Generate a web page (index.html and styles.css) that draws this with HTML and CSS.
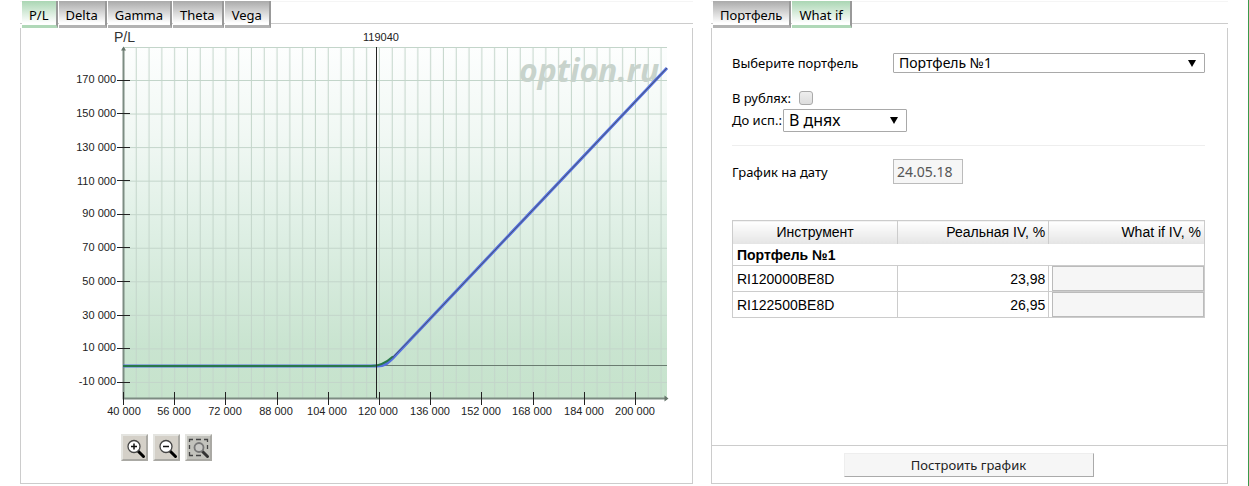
FILE: index.html
```
<!DOCTYPE html>
<html lang="ru">
  <head>
    <meta charset="utf-8">
    <title>option.ru</title>
    <link rel="stylesheet" href="styles.css">
  </head>
  <body>
    <main class="page">
      <section class="box">
        <nav class="tabs">
          <a class="tab tab_active" href="#pl">P/L</a>
          <a class="tab" href="#delta">Delta</a>
          <a class="tab" href="#gamma">Gamma</a>
          <a class="tab" href="#theta">Theta</a>
          <a class="tab" href="#vega">Vega</a>
        </nav>
        <div class="panel">
          <svg class="chart" viewBox="0 0 671 400">
            <defs>
              <linearGradient id="fill" x1="0" y1="0" x2="0" y2="1">
                <stop offset="0" stop-color="#fdfefe" />
                <stop offset="0.25" stop-color="#f1f8f4" />
                <stop offset="0.5" stop-color="#e0f0e6" />
                <stop offset="0.85" stop-color="#c9e4d0" />
                <stop offset="1" stop-color="#c6e3cc" />
              </linearGradient>
              <pattern id="columns" x="103" y="0" width="12.8" height="400" patternUnits="userSpaceOnUse">
                <path class="grid-line" d="M12.2 0V400" />
              </pattern>
              <pattern id="rows" x="0" y="52" width="671" height="33.55" patternUnits="userSpaceOnUse">
                <path class="grid-line" d="M0 .5H671" />
              </pattern>
            </defs>

            <rect x="102" y="19" width="544" height="351" fill="url(#fill)" />
            <rect x="102" y="19" width="544" height="351" fill="url(#columns)" />
            <rect x="102" y="19" width="544" height="351" fill="url(#rows)" />
            <path class="grid-line" d="M102 19.5H646" />
            <text class="watermark" x="498" y="54">option.ru</text>

            <!-- axes -->
            <path class="axis" d="M102.5 20V370.5H646" />
            <path class="arrow" d="M100 22.500l2.500-4 2.500 4zM643.500 367.500l4 3-4 3z" />
            <path class="zero" d="M102 337.500H646" />
            <path class="tick" d="M96 52.500h13M96 85.500h13M96 119.500h13M96 152.500h13M96 186.500h13M96 219.500h13M96 253.500h13M96 287.500h13M96 320.500h13M96 354.500h13" />
            <path class="tick" d="M102.500 364v13M153.500 364v13M204.500 364v13M256.500 364v13M307.500 364v13M358.500 364v13M409.500 364v13M460.500 364v13M512.500 364v13M563.500 364v13M614.500 364v13" />

            <path class="curve curve_blue" d="M102 338H356C364 338 367 335 372 330L398 302.500L646 40" />
            <path class="curve curve_green" d="M102 338H350C360 338 366 334 372 328.500" />
            <path class="curve curve_dark" d="M371 330L398 302.500L646 40" />
            <path class="tick" d="M355.500 19V370" />

            <text class="axis-name" x="93" y="14">P/L</text>
            <text class="label label_x" x="360" y="13">119040</text>

            <g class="label label_y">
              <text x="95" y="55">170 000</text>
              <text x="95" y="89">150 000</text>
              <text x="95" y="123">130 000</text>
              <text x="95" y="157">110 000</text>
              <text x="95" y="189">90 000</text>
              <text x="95" y="223">70 000</text>
              <text x="95" y="257">50 000</text>
              <text x="95" y="291">30 000</text>
              <text x="95" y="323">10 000</text>
              <text x="95" y="357">-10 000</text>
            </g>
            <g class="label label_x">
              <text x="103" y="387">40 000</text>
              <text x="153" y="387">56 000</text>
              <text x="204" y="387">72 000</text>
              <text x="255" y="387">88 000</text>
              <text x="306" y="387">104 000</text>
              <text x="357" y="387">120 000</text>
              <text x="409" y="387">136 000</text>
              <text x="460" y="387">152 000</text>
              <text x="511" y="387">168 000</text>
              <text x="563" y="387">184 000</text>
              <text x="614" y="387">200 000</text>
            </g>
          </svg>

          <div class="zoom">
            <button class="zoom-button" type="button" aria-label="Увеличить">
              <svg width="23" height="23" viewBox="0 0 23 23">
                <path d="M14.500 14.500l6 6" stroke="#000" stroke-width="3" stroke-linecap="round" />
                <circle cx="11" cy="10.500" r="6" fill="#fff" stroke="#444" stroke-width="1.300" />
                <path d="M8 10.500h6M11 7.500v6" stroke="#111" stroke-width="1.500" />
              </svg>
            </button>
            <button class="zoom-button" type="button" aria-label="Уменьшить">
              <svg width="23" height="23" viewBox="0 0 23 23">
                <path d="M14.500 14.500l6 6" stroke="#000" stroke-width="3" stroke-linecap="round" />
                <circle cx="11" cy="10.500" r="6" fill="#fff" stroke="#444" stroke-width="1.300" />
                <path d="M8 10.500h6" stroke="#111" stroke-width="1.500" />
              </svg>
            </button>
            <button class="zoom-button zoom-button_area" type="button" aria-label="Выделить область">
              <svg width="23" height="23" viewBox="0 0 23 23">
                <path d="M2.500 6V3.500H6M9 3.500h5M17 3.500h3.500V6M20.500 9v4M2.500 9v4M2.500 16v3.500H6M9 19.500h5" fill="none" stroke="#444" stroke-width="1.300" />
                <path d="M15.500 15.500l5 5" stroke="#333" stroke-width="3" stroke-linecap="round" />
                <circle cx="12" cy="11.500" r="4.500" fill="#c9c9c6" stroke="#777" stroke-width="1.800" />
              </svg>
            </button>
          </div>
        </div>
      </section>

      <section class="box">
        <nav class="tabs">
          <a class="tab" href="#portfolio">Портфель</a>
          <a class="tab tab_active" href="#whatif">What if</a>
        </nav>
        <form class="panel">
          <div class="settings">
            <div class="field">
              <label class="field-name" for="portfolio">Выберите портфель</label>
              <select class="select select_wide" id="portfolio">
                <option>Портфель №1</option>
              </select>
            </div>

            <div class="options">
              <div class="option">
                <label for="rub">В рублях:</label>
                <input class="checkbox" id="rub" type="checkbox">
              </div>
              <div class="option">
                <label for="term">До исп.:</label>
                <select class="select select_term" id="term">
                  <option>В днях</option>
                </select>
              </div>
            </div>

            <div class="field">
              <label class="field-name" for="date">График на дату</label>
              <input class="date" id="date" type="text" value="24.05.18">
            </div>

            <table class="table">
              <thead>
                <tr>
                  <th class="instrument">Инструмент</th>
                  <th class="number real">Реальная IV, %</th>
                  <th class="number">What if IV, %</th>
                </tr>
              </thead>
              <tbody>
                <tr>
                  <th class="group" colspan="3">Портфель №1</th>
                </tr>
                <tr>
                  <td>RI120000BE8D</td>
                  <td class="number">23,98</td>
                  <td class="edit"><input class="iv" type="text" aria-label="What if IV RI120000BE8D"></td>
                </tr>
                <tr>
                  <td>RI122500BE8D</td>
                  <td class="number">26,95</td>
                  <td class="edit"><input class="iv" type="text" aria-label="What if IV RI122500BE8D"></td>
                </tr>
              </tbody>
            </table>
          </div>

          <div class="footer">
            <button class="submit" type="button">Построить график</button>
          </div>
        </form>
      </section>
    </main>
  </body>
</html>
```

FILE: styles.css
```
* {
  box-sizing: border-box;
}

body {
  margin: 0;
  font-family: "Noto Sans", "Open Sans", sans-serif;
  font-size: 13px;
  line-height: 20px;
  color: #000;
  background: #fff;
}

.page {
  display: grid;
  grid-template-columns: 673fr 517fr;
  gap: 18px;
  min-height: 100vh;
  padding: 1px 20px 2px;
  border-right: 1px solid #3a9a4a;
}

.box {
  display: flex;
  flex-direction: column;
  min-width: 0;
}

/* tabs */

.tabs {
  display: flex;
  gap: 1px;
  height: 27px;
  padding-left: 2px;
  background: linear-gradient(#f5f5f5, #f5f5f5) 0 0 / 100% 1px no-repeat,
    linear-gradient(#ccc, #ccc) 0 22px / 100% 1px no-repeat;
}

.tab {
  height: 27px;
  padding: 4px 7px 0;
  border-right: 2px solid #999;
  border-bottom: 3px solid #b3b3b3;
  background: linear-gradient(#aaa, #fff 22px);
  color: #000;
  text-decoration: none;
}

.tab_active {
  border-bottom-color: #b0d8b8;
  background: linear-gradient(#aad6b3, #fff 22px);
}

.panel {
  display: flex;
  flex: 1;
  flex-direction: column;
  border: 1px solid #ccc;
  border-top: 0;
}

/* chart */

.chart {
  display: block;
  width: 100%;
  font-family: "Liberation Sans", Arial, sans-serif;
}

.grid-line {
  fill: none;
  stroke: #c3d5ca;
}

.axis {
  fill: none;
  stroke: #7c8c82;
  stroke-width: 2px;
}

.arrow {
  fill: #66756b;
}

.zero {
  stroke: #6a7c70;
}

.tick {
  stroke: #222;
}

.curve {
  fill: none;
}

.curve_blue {
  stroke: #5570e0;
  stroke-width: 3px;
}

.curve_green {
  stroke: #28784a;
  stroke-width: 2px;
}

.curve_dark {
  stroke: #4a5570;
  stroke-width: 1px;
}

.watermark {
  font-family: "Open Sans", sans-serif;
  font-size: 32px;
  font-style: italic;
  font-weight: bold;
  fill: #c8d3cc;
}

.axis-name {
  font-size: 14px;
  fill: #333;
}

.label {
  font-size: 11px;
  fill: #222;
}

.label_x {
  text-anchor: middle;
}

.label_y {
  text-anchor: end;
}

.zoom {
  display: flex;
  gap: 5px;
  padding: 6px 100px;
}

.zoom-button {
  width: 27px;
  height: 27px;
  padding: 0;
  border: 2px solid;
  border-color: #e4e4e0 #aaa9a4 #aaa9a4 #e4e4e0;
  background: #d4d0c8;
}

.zoom-button svg {
  display: block;
}

.zoom-button_area {
  background: #c2c2bc;
}

/* settings */

.settings {
  flex: 1;
  padding: 25px 22px 0 20px;
}

.field {
  display: flex;
  align-items: center;
}

.field-name {
  width: 161px;
}

.select {
  appearance: none;
  border: 1px solid #a9a9a9;
  border-radius: 1px;
  color: #000;
  font-family: inherit;
  background: #fff url("data:image/svg+xml,%3Csvg xmlns='http://www.w3.org/2000/svg' width='8' height='7'%3E%3Cpath d='M0 0h8L4 7z'/%3E%3C/svg%3E") right 8px center no-repeat;
}

.select_wide {
  flex: 1;
  height: 20px;
  padding: 0 5px 1px;
  font-size: 14px;
  line-height: 17px;
}

.select_term {
  width: 124px;
  height: 23px;
  padding: 0 5px;
  font-size: 16px;
  line-height: 21px;
}

.options {
  margin-bottom: 13px;
  padding: 14px 0;
  border-bottom: 1px solid #eee;
}

.option {
  display: flex;
  align-items: center;
  gap: 1px;
  height: 22px;
}

.checkbox {
  appearance: none;
  width: 14px;
  height: 14px;
  margin: 0 7px;
  border: 1px solid #aaa;
  border-radius: 3px;
  background: linear-gradient(#eee, #ddd);
}

.date {
  width: 70px;
  height: 25px;
  padding: 0 3px;
  border: 1px solid #bbb;
  background: #f6f6f6;
  color: #555;
  font: inherit;
  font-size: 14px;
}

/* table */

.table {
  width: 100%;
  margin-top: 36px;
  border: 1px solid #ccc;
  border-collapse: collapse;
  table-layout: fixed;
  font-family: "Liberation Sans", Arial, sans-serif;
  font-size: 14px;
}

.table th,
.table td {
  height: 26px;
  padding: 0 4px;
  border: 1px solid #ccc;
}

.table thead th {
  height: 23px;
  border-bottom: 0;
  background: linear-gradient(#fff, #e4e4e4);
  font-weight: normal;
}

.table .instrument {
  width: 35%;
}

.table .real {
  width: 32%;
}

.table .number {
  padding-right: 3px;
  text-align: right;
}

.table .group {
  height: 22px;
  padding-top: 2px;
  border-top: 0;
  line-height: 19px;
  text-align: left;
}

.table .edit {
  padding: 0 0 0 3px;
}

.iv {
  display: block;
  width: 100%;
  height: 25px;
  border: 1px solid #bbb;
  background: #f6f6f6;
}

.footer {
  display: flex;
  justify-content: center;
  padding: 7px 8px 6px 6px;
  border-top: 1px solid #ccc;
}

.submit {
  width: 250px;
  height: 24px;
  padding: 0;
  border: 1px solid;
  border-color: #eee #aaa #aaa #eee;
  background: #f6f6f6;
  color: #222;
  font: inherit;
}
```
